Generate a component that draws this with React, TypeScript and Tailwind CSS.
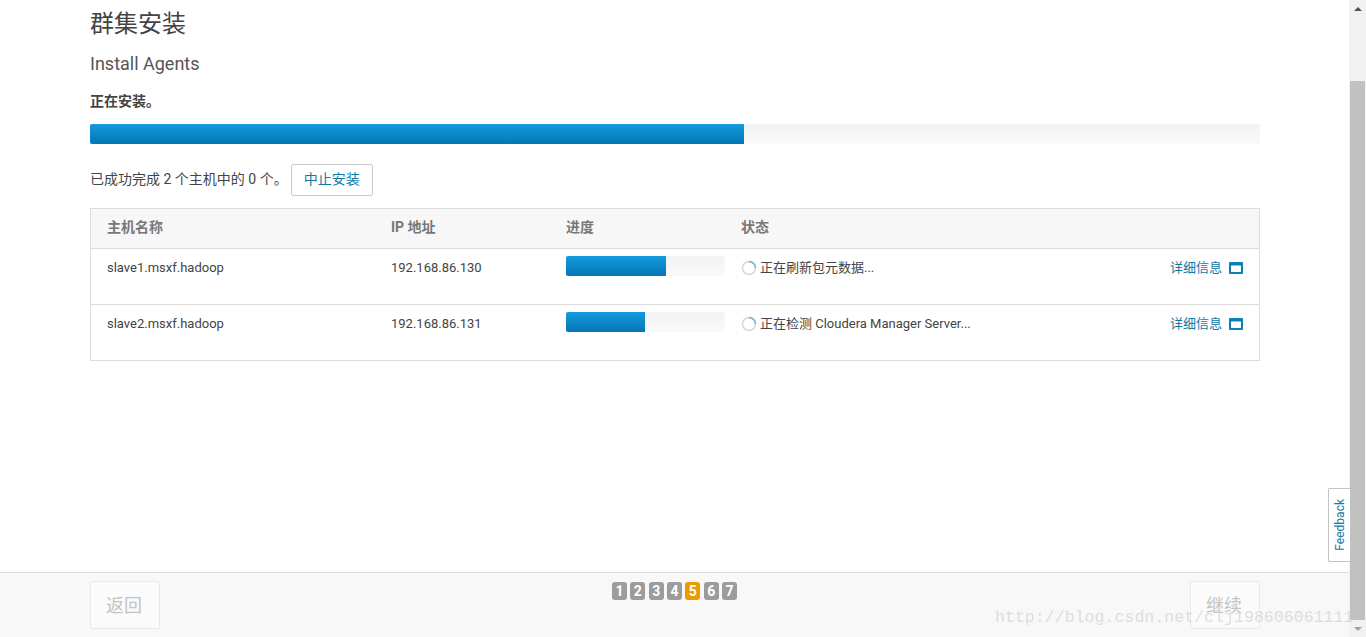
const cjk = "font-['Roboto','Noto_Sans_CJK_SC',sans-serif]";

const hosts = [
  { name: "slave1.msxf.hadoop", ip: "192.168.86.130", done: 100, status: "正在刷新包元数据..." },
  { name: "slave2.msxf.hadoop", ip: "192.168.86.131", done: 79, status: "正在检测 Cloudera Manager Server..." },
];

const Bar = ({ width }: { width: number }) => (
  <div className="h-full bg-gradient-to-b from-[#149ade] to-[#0477b5]" style={{ width }} />
);

const WindowIcon = () => (
  <svg width="14" height="12" viewBox="0 0 14 12" className="block shrink-0">
    <rect width="14" height="12" rx="1" fill="#0d7fb5" />
    <rect x="2" y="3.5" width="10" height="6.5" fill="#fff" />
  </svg>
);

const Spinner = () => (
  <svg width="16" height="16" viewBox="0 0 16 16" className="shrink-0">
    <circle cx="8" cy="8" r="6.5" fill="none" stroke="#d3d9dc" strokeWidth="1.5" />
    <path d="M8 1.5A6.5 6.5 0 0 1 14.5 8" fill="none" stroke="#6db5d8" strokeWidth="1.5" />
  </svg>
);

export default function App() {
  return (
    <div className={`relative flex h-[637px] w-full overflow-hidden bg-white text-[#444] ${cjk}`}>
      <div className="flex min-w-0 flex-1 flex-col">
        {/* Wizard content */}
        <div className="flex-1 pl-[90px] pr-[89px]">
          <h1 className="pt-[8px] text-[24px] font-normal leading-[32px] text-[#444]">群集安装</h1>
          <h2 className="mt-[13px] text-[18px] font-normal leading-[22px] text-[#555]">Install Agents</h2>
          <p className="mt-[16px] text-[14px] font-bold leading-[20px]">正在安装。</p>

          <div className="mt-[13px] h-[20px] overflow-hidden rounded-[2px] bg-gradient-to-b from-[#f3f3f3] to-[#f9f9f9]">
            <Bar width={654} />
          </div>

          <div className="mt-[20px] flex h-[32px] items-center gap-[3px]">
            <span className="pb-[2px] text-[14px]">已成功完成 2 个主机中的 0 个。</span>
            <button className="h-[32px] w-[82px] rounded-[2px] border border-[#c8c8c8] bg-white pb-[2px] text-[14px] text-[#0f7aa8]">
              中止安装
            </button>
          </div>

          {/* Hosts table */}
          <div className="mt-[12px] border border-[#dcdcdc] text-[13px]">
            <div className="grid h-[40px] grid-cols-[284px_175px_175px_1fr] items-center border-b border-[#dcdcdc] bg-[#f7f7f7] px-[16px] pb-[2px] text-[14px] font-bold text-[#777]">
              <div>主机名称</div>
              <div>IP 地址</div>
              <div>进度</div>
              <div>状态</div>
            </div>
            {hosts.map((host, i) => (
              <div
                key={host.name}
                className={`grid grid-cols-[284px_175px_175px_1fr] px-[16px] pt-[7px] ${i > 0 ? "h-[56px] border-t border-[#dcdcdc]" : "h-[55px]"}`}
              >
                <div className="leading-[24px]">{host.name}</div>
                <div className="leading-[24px]">{host.ip}</div>
                <div className="h-[20px] w-[159px] overflow-hidden rounded-[2px] bg-gradient-to-b from-[#f3f3f3] to-[#f9f9f9]">
                  <Bar width={host.done} />
                </div>
                <div className="flex h-[24px] items-center">
                  <Spinner />
                  <span className="ml-[3px]">{host.status}</span>
                  <span className="ml-auto text-[#0f7aa8]">详细信息</span>
                  <span className="ml-[7px]">
                    <WindowIcon />
                  </span>
                </div>
              </div>
            ))}
          </div>
        </div>

        {/* Footer */}
        <div className="flex h-[65px] items-start justify-between border-t border-[#dcdcdc] bg-[#f8f8f8] pl-[90px] pr-[89px] pt-[8px]">
          <button className="h-[48px] w-[70px] rounded-[2px] border border-[#e9e9e9] bg-[#fbfbfb] pr-[2px] text-[18px] text-[#c4c4c4]">
            返回
          </button>
          <div className="flex gap-[3.33px] pr-[1px] pt-[1px]">
            {[1, 2, 3, 4, 5, 6, 7].map((n) => (
              <span
                key={n}
                className={`flex h-[18px] w-[15px] items-center justify-center rounded-[3px] text-[14px] font-bold text-white ${n === 5 ? "bg-[#e99b00]" : "bg-[#9c9c9c]"}`}
              >
                {n}
              </span>
            ))}
          </div>
          <button className="h-[48px] w-[70px] rounded-[2px] border border-[#e9e9e9] bg-[#fbfbfb] pr-[2px] text-[18px] text-[#c4c4c4]">
            继续
          </button>
        </div>
      </div>

      {/* Scrollbar */}
      <div className="flex w-[17px] shrink-0 flex-col items-center bg-[#f1f1f1]">
        <div className="flex h-[17px] items-center justify-center">
          <div className="h-0 w-0 border-x-[4px] border-b-[4px] border-x-transparent border-b-[#505050]" />
        </div>
        <div className="mt-[64px] h-[539px] w-[15px] bg-[#c1c1c1]" />
        <div className="mt-auto flex h-[17px] items-center justify-center">
          <div className="h-0 w-0 border-x-[4px] border-t-[4px] border-x-transparent border-t-[#a0a0a0]" />
        </div>
      </div>

      {/* Feedback tab */}
      <div className="absolute left-[1328px] top-[488px] flex h-[74px] w-[22px] items-center justify-center rounded-l-[2px] border border-r-0 border-[#c4c4c4] bg-white">
        <span className="rotate-180 text-[12px] leading-[14px] text-[#0f7aa8] [writing-mode:vertical-rl]">Feedback</span>
      </div>

      {/* Blog watermark */}
      <div className="pointer-events-none absolute left-[995px] top-[608px] whitespace-nowrap font-['Liberation_Mono',monospace] text-[16.6px] leading-[20px] text-[#d2d2c9]/70">
        http://blog.csdn.net/clj198606061111
      </div>
    </div>
  );
}
